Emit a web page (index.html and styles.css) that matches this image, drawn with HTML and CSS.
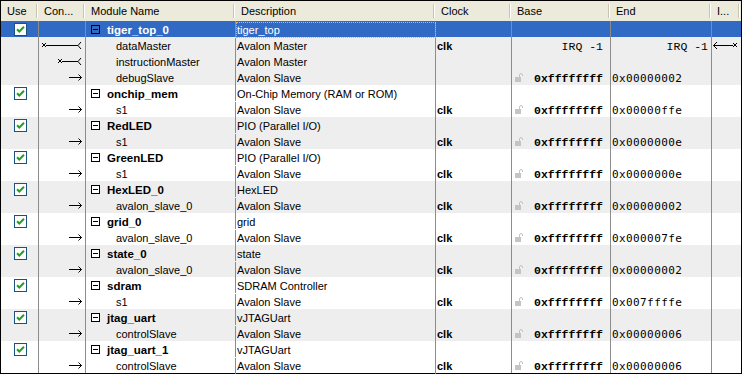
FILE: index.html
```html
<!DOCTYPE html>
<html>
<head>
<meta charset="utf-8">
<link rel="stylesheet" href="styles.css">
</head>
<body>
<div class="frame">
  <div class="header">
    <div class="hc">Use</div>
    <div class="hc">Con...</div>
    <div class="hc">Module Name</div>
    <div class="hc">Description</div>
    <div class="hc">Clock</div>
    <div class="hc">Base</div>
    <div class="hc">End</div>
    <div class="hc">I...</div>
  </div>

  <div class="row sel">
    <div class="c use"><span class="cb"><svg width="9" height="9" viewBox="0 0 9 9"><path d="M1 4.2 L3.3 6.5 L8 1.8" fill="none" stroke="#21a121" stroke-width="2"/></svg></span></div>
    <div class="c con"></div>
    <div class="c mod"><span class="tg"></span><b>tiger_top_0</b></div>
    <div class="c desc focus">tiger_top</div>
    <div class="c clk"></div>
    <div class="c base"></div>
    <div class="c end"></div>
    <div class="c irq"></div>
  </div>
  <div class="row gray">
    <div class="c use"></div>
    <div class="c con"><svg width="42" height="16" viewBox="0 0 42 16"><path d="M1 6 L5 10 M5 6 L1 10 M5 8.5 H37 M40 5 L37 8.5 L40 12" fill="none" stroke="#000" stroke-width="1"/></svg></div>
    <div class="c mod sub">dataMaster</div>
    <div class="c desc">Avalon Master</div>
    <div class="c clk"><b>clk</b></div>
    <div class="c base"><span class="irqv">IRQ -1</span></div>
    <div class="c end end-irq"><span class="irqv">IRQ -1</span></div>
    <div class="c irq"><svg width="28" height="16" viewBox="0 0 28 16"><path d="M5 5 L1.5 8.5 L5 12 M1.5 8.5 H21 M21 6 L25 10 M25 6 L21 10" fill="none" stroke="#000" stroke-width="1"/></svg></div>
  </div>
  <div class="row gray">
    <div class="c use"></div>
    <div class="c con"><svg width="26" height="16" viewBox="0 0 26 16"><path d="M1 6 L5 10 M5 6 L1 10 M5 8.5 H21 M24 5 L21 8.5 L24 12" fill="none" stroke="#000" stroke-width="1"/></svg></div>
    <div class="c mod sub">instructionMaster</div>
    <div class="c desc">Avalon Master</div>
    <div class="c clk"></div>
    <div class="c base"></div>
    <div class="c end"></div>
    <div class="c irq"></div>
  </div>
  <div class="row gray">
    <div class="c use"></div>
    <div class="c con"><svg class="arr" width="14" height="16" viewBox="0 0 14 16"><path d="M0 8.5 H12.5 M9.5 5.5 L12.5 8.5 L9.5 11.5" fill="none" stroke="#000" stroke-width="1"/></svg></div>
    <div class="c mod sub">debugSlave</div>
    <div class="c desc">Avalon Slave</div>
    <div class="c clk"></div>
    <div class="c base"><svg class="lock" width="8" height="9" viewBox="0 0 8 9"><path d="M0 4 H6 V9 H0 Z" fill="#c4c4c4"/><path d="M4.5 4 V2 Q4.5 0.5 6 0.5 Q7.5 0.5 7.5 2 V3" fill="none" stroke="#c4c4c4" stroke-width="1"/></svg><b class="hex">0xffffffff</b></div>
    <div class="c end"><span class="hv">0x00000002</span></div>
    <div class="c irq"></div>
  </div>

  <div class="row">
    <div class="c use"><span class="cb"><svg width="9" height="9" viewBox="0 0 9 9"><path d="M1 4.2 L3.3 6.5 L8 1.8" fill="none" stroke="#21a121" stroke-width="2"/></svg></span></div>
    <div class="c con"></div>
    <div class="c mod"><span class="tg"></span><b>onchip_mem</b></div>
    <div class="c desc">On-Chip Memory (RAM or ROM)</div>
    <div class="c clk"></div><div class="c base"></div><div class="c end"></div><div class="c irq"></div>
  </div>
  <div class="row">
    <div class="c use"></div>
    <div class="c con"><svg class="arr" width="14" height="16" viewBox="0 0 14 16"><path d="M0 8.5 H12.5 M9.5 5.5 L12.5 8.5 L9.5 11.5" fill="none" stroke="#000" stroke-width="1"/></svg></div>
    <div class="c mod sub">s1</div>
    <div class="c desc">Avalon Slave</div>
    <div class="c clk"><b>clk</b></div>
    <div class="c base"><svg class="lock" width="8" height="9" viewBox="0 0 8 9"><path d="M0 4 H6 V9 H0 Z" fill="#c4c4c4"/><path d="M4.5 4 V2 Q4.5 0.5 6 0.5 Q7.5 0.5 7.5 2 V3" fill="none" stroke="#c4c4c4" stroke-width="1"/></svg><b class="hex">0xffffffff</b></div>
    <div class="c end"><span class="hv">0x00000ffe</span></div>
    <div class="c irq"></div>
  </div>

  <div class="row gray">
    <div class="c use"><span class="cb"><svg width="9" height="9" viewBox="0 0 9 9"><path d="M1 4.2 L3.3 6.5 L8 1.8" fill="none" stroke="#21a121" stroke-width="2"/></svg></span></div>
    <div class="c con"></div>
    <div class="c mod"><span class="tg"></span><b>RedLED</b></div>
    <div class="c desc">PIO (Parallel I/O)</div>
    <div class="c clk"></div><div class="c base"></div><div class="c end"></div><div class="c irq"></div>
  </div>
  <div class="row gray">
    <div class="c use"></div>
    <div class="c con"><svg class="arr" width="14" height="16" viewBox="0 0 14 16"><path d="M0 8.5 H12.5 M9.5 5.5 L12.5 8.5 L9.5 11.5" fill="none" stroke="#000" stroke-width="1"/></svg></div>
    <div class="c mod sub">s1</div>
    <div class="c desc">Avalon Slave</div>
    <div class="c clk"><b>clk</b></div>
    <div class="c base"><svg class="lock" width="8" height="9" viewBox="0 0 8 9"><path d="M0 4 H6 V9 H0 Z" fill="#c4c4c4"/><path d="M4.5 4 V2 Q4.5 0.5 6 0.5 Q7.5 0.5 7.5 2 V3" fill="none" stroke="#c4c4c4" stroke-width="1"/></svg><b class="hex">0xffffffff</b></div>
    <div class="c end"><span class="hv">0x0000000e</span></div>
    <div class="c irq"></div>
  </div>

  <div class="row">
    <div class="c use"><span class="cb"><svg width="9" height="9" viewBox="0 0 9 9"><path d="M1 4.2 L3.3 6.5 L8 1.8" fill="none" stroke="#21a121" stroke-width="2"/></svg></span></div>
    <div class="c con"></div>
    <div class="c mod"><span class="tg"></span><b>GreenLED</b></div>
    <div class="c desc">PIO (Parallel I/O)</div>
    <div class="c clk"></div><div class="c base"></div><div class="c end"></div><div class="c irq"></div>
  </div>
  <div class="row">
    <div class="c use"></div>
    <div class="c con"><svg class="arr" width="14" height="16" viewBox="0 0 14 16"><path d="M0 8.5 H12.5 M9.5 5.5 L12.5 8.5 L9.5 11.5" fill="none" stroke="#000" stroke-width="1"/></svg></div>
    <div class="c mod sub">s1</div>
    <div class="c desc">Avalon Slave</div>
    <div class="c clk"><b>clk</b></div>
    <div class="c base"><svg class="lock" width="8" height="9" viewBox="0 0 8 9"><path d="M0 4 H6 V9 H0 Z" fill="#c4c4c4"/><path d="M4.5 4 V2 Q4.5 0.5 6 0.5 Q7.5 0.5 7.5 2 V3" fill="none" stroke="#c4c4c4" stroke-width="1"/></svg><b class="hex">0xffffffff</b></div>
    <div class="c end"><span class="hv">0x0000000e</span></div>
    <div class="c irq"></div>
  </div>

  <div class="row gray">
    <div class="c use"><span class="cb"><svg width="9" height="9" viewBox="0 0 9 9"><path d="M1 4.2 L3.3 6.5 L8 1.8" fill="none" stroke="#21a121" stroke-width="2"/></svg></span></div>
    <div class="c con"></div>
    <div class="c mod"><span class="tg"></span><b>HexLED_0</b></div>
    <div class="c desc">HexLED</div>
    <div class="c clk"></div><div class="c base"></div><div class="c end"></div><div class="c irq"></div>
  </div>
  <div class="row gray">
    <div class="c use"></div>
    <div class="c con"><svg class="arr" width="14" height="16" viewBox="0 0 14 16"><path d="M0 8.5 H12.5 M9.5 5.5 L12.5 8.5 L9.5 11.5" fill="none" stroke="#000" stroke-width="1"/></svg></div>
    <div class="c mod sub">avalon_slave_0</div>
    <div class="c desc">Avalon Slave</div>
    <div class="c clk"><b>clk</b></div>
    <div class="c base"><svg class="lock" width="8" height="9" viewBox="0 0 8 9"><path d="M0 4 H6 V9 H0 Z" fill="#c4c4c4"/><path d="M4.5 4 V2 Q4.5 0.5 6 0.5 Q7.5 0.5 7.5 2 V3" fill="none" stroke="#c4c4c4" stroke-width="1"/></svg><b class="hex">0xffffffff</b></div>
    <div class="c end"><span class="hv">0x00000002</span></div>
    <div class="c irq"></div>
  </div>

  <div class="row">
    <div class="c use"><span class="cb"><svg width="9" height="9" viewBox="0 0 9 9"><path d="M1 4.2 L3.3 6.5 L8 1.8" fill="none" stroke="#21a121" stroke-width="2"/></svg></span></div>
    <div class="c con"></div>
    <div class="c mod"><span class="tg"></span><b>grid_0</b></div>
    <div class="c desc">grid</div>
    <div class="c clk"></div><div class="c base"></div><div class="c end"></div><div class="c irq"></div>
  </div>
  <div class="row">
    <div class="c use"></div>
    <div class="c con"><svg class="arr" width="14" height="16" viewBox="0 0 14 16"><path d="M0 8.5 H12.5 M9.5 5.5 L12.5 8.5 L9.5 11.5" fill="none" stroke="#000" stroke-width="1"/></svg></div>
    <div class="c mod sub">avalon_slave_0</div>
    <div class="c desc">Avalon Slave</div>
    <div class="c clk"><b>clk</b></div>
    <div class="c base"><svg class="lock" width="8" height="9" viewBox="0 0 8 9"><path d="M0 4 H6 V9 H0 Z" fill="#c4c4c4"/><path d="M4.5 4 V2 Q4.5 0.5 6 0.5 Q7.5 0.5 7.5 2 V3" fill="none" stroke="#c4c4c4" stroke-width="1"/></svg><b class="hex">0xffffffff</b></div>
    <div class="c end"><span class="hv">0x000007fe</span></div>
    <div class="c irq"></div>
  </div>

  <div class="row gray">
    <div class="c use"><span class="cb"><svg width="9" height="9" viewBox="0 0 9 9"><path d="M1 4.2 L3.3 6.5 L8 1.8" fill="none" stroke="#21a121" stroke-width="2"/></svg></span></div>
    <div class="c con"></div>
    <div class="c mod"><span class="tg"></span><b>state_0</b></div>
    <div class="c desc">state</div>
    <div class="c clk"></div><div class="c base"></div><div class="c end"></div><div class="c irq"></div>
  </div>
  <div class="row gray">
    <div class="c use"></div>
    <div class="c con"><svg class="arr" width="14" height="16" viewBox="0 0 14 16"><path d="M0 8.5 H12.5 M9.5 5.5 L12.5 8.5 L9.5 11.5" fill="none" stroke="#000" stroke-width="1"/></svg></div>
    <div class="c mod sub">avalon_slave_0</div>
    <div class="c desc">Avalon Slave</div>
    <div class="c clk"><b>clk</b></div>
    <div class="c base"><svg class="lock" width="8" height="9" viewBox="0 0 8 9"><path d="M0 4 H6 V9 H0 Z" fill="#c4c4c4"/><path d="M4.5 4 V2 Q4.5 0.5 6 0.5 Q7.5 0.5 7.5 2 V3" fill="none" stroke="#c4c4c4" stroke-width="1"/></svg><b class="hex">0xffffffff</b></div>
    <div class="c end"><span class="hv">0x00000002</span></div>
    <div class="c irq"></div>
  </div>

  <div class="row">
    <div class="c use"><span class="cb"><svg width="9" height="9" viewBox="0 0 9 9"><path d="M1 4.2 L3.3 6.5 L8 1.8" fill="none" stroke="#21a121" stroke-width="2"/></svg></span></div>
    <div class="c con"></div>
    <div class="c mod"><span class="tg"></span><b>sdram</b></div>
    <div class="c desc">SDRAM Controller</div>
    <div class="c clk"></div><div class="c base"></div><div class="c end"></div><div class="c irq"></div>
  </div>
  <div class="row">
    <div class="c use"></div>
    <div class="c con"><svg class="arr" width="14" height="16" viewBox="0 0 14 16"><path d="M0 8.5 H12.5 M9.5 5.5 L12.5 8.5 L9.5 11.5" fill="none" stroke="#000" stroke-width="1"/></svg></div>
    <div class="c mod sub">s1</div>
    <div class="c desc">Avalon Slave</div>
    <div class="c clk"><b>clk</b></div>
    <div class="c base"><svg class="lock" width="8" height="9" viewBox="0 0 8 9"><path d="M0 4 H6 V9 H0 Z" fill="#c4c4c4"/><path d="M4.5 4 V2 Q4.5 0.5 6 0.5 Q7.5 0.5 7.5 2 V3" fill="none" stroke="#c4c4c4" stroke-width="1"/></svg><b class="hex">0xffffffff</b></div>
    <div class="c end"><span class="hv">0x007ffffe</span></div>
    <div class="c irq"></div>
  </div>

  <div class="row gray">
    <div class="c use"><span class="cb"><svg width="9" height="9" viewBox="0 0 9 9"><path d="M1 4.2 L3.3 6.5 L8 1.8" fill="none" stroke="#21a121" stroke-width="2"/></svg></span></div>
    <div class="c con"></div>
    <div class="c mod"><span class="tg"></span><b>jtag_uart</b></div>
    <div class="c desc">vJTAGUart</div>
    <div class="c clk"></div><div class="c base"></div><div class="c end"></div><div class="c irq"></div>
  </div>
  <div class="row gray">
    <div class="c use"></div>
    <div class="c con"><svg class="arr" width="14" height="16" viewBox="0 0 14 16"><path d="M0 8.5 H12.5 M9.5 5.5 L12.5 8.5 L9.5 11.5" fill="none" stroke="#000" stroke-width="1"/></svg></div>
    <div class="c mod sub">controlSlave</div>
    <div class="c desc">Avalon Slave</div>
    <div class="c clk"><b>clk</b></div>
    <div class="c base"><svg class="lock" width="8" height="9" viewBox="0 0 8 9"><path d="M0 4 H6 V9 H0 Z" fill="#c4c4c4"/><path d="M4.5 4 V2 Q4.5 0.5 6 0.5 Q7.5 0.5 7.5 2 V3" fill="none" stroke="#c4c4c4" stroke-width="1"/></svg><b class="hex">0xffffffff</b></div>
    <div class="c end"><span class="hv">0x00000006</span></div>
    <div class="c irq"></div>
  </div>

  <div class="row">
    <div class="c use"><span class="cb"><svg width="9" height="9" viewBox="0 0 9 9"><path d="M1 4.2 L3.3 6.5 L8 1.8" fill="none" stroke="#21a121" stroke-width="2"/></svg></span></div>
    <div class="c con"></div>
    <div class="c mod"><span class="tg"></span><b>jtag_uart_1</b></div>
    <div class="c desc">vJTAGUart</div>
    <div class="c clk"></div><div class="c base"></div><div class="c end"></div><div class="c irq"></div>
  </div>
  <div class="row">
    <div class="c use"></div>
    <div class="c con"><svg class="arr" width="14" height="16" viewBox="0 0 14 16"><path d="M0 8.5 H12.5 M9.5 5.5 L12.5 8.5 L9.5 11.5" fill="none" stroke="#000" stroke-width="1"/></svg></div>
    <div class="c mod sub">controlSlave</div>
    <div class="c desc">Avalon Slave</div>
    <div class="c clk"><b>clk</b></div>
    <div class="c base"><svg class="lock" width="8" height="9" viewBox="0 0 8 9"><path d="M0 4 H6 V9 H0 Z" fill="#c4c4c4"/><path d="M4.5 4 V2 Q4.5 0.5 6 0.5 Q7.5 0.5 7.5 2 V3" fill="none" stroke="#c4c4c4" stroke-width="1"/></svg><b class="hex">0xffffffff</b></div>
    <div class="c end"><span class="hv">0x00000006</span></div>
    <div class="c irq"></div>
  </div>
</div>
</body>
</html>
```

FILE: styles.css
```css
html, body {
  margin: 0;
  padding: 0;
  background: #fff;
}
.frame {
  width: 740px;
  border: 1px solid #000;
  font-family: "Liberation Sans", Arial, sans-serif;
  font-size: 11px;
  color: #000;
}
.header,
.row {
  display: grid;
  grid-template-columns: 38px 47px 150px 200px 76px 99px 101px 29px;
}
.header {
  height: 20px;
  background: #ebeadb;
}
.hc {
  line-height: 20px;
  padding-left: 6px;
  white-space: nowrap;
  overflow: hidden;
  background:
    linear-gradient(#c7c5b2, #c7c5b2) no-repeat right 2px top 3px / 1px 14px,
    linear-gradient(#ffffff, #ffffff) no-repeat right 1px top 3px / 1px 14px,
    #ebeadb;
}
.hc:nth-child(n+2) {
  padding-left: 5px;
}
.row {
  height: 16px;
  background: #fff;
}
.row.gray {
  background: #eeeeee;
}
.row.sel {
  background: #316ac5;
  color: #fff;
}
.c {
  border-right: 1px solid #8c8c8c;
  height: 16px;
  line-height: 15px;
  white-space: nowrap;
  overflow: hidden;
  display: flex;
  align-items: center;
  box-sizing: border-box;
}
.c.irq {
  border-right: none;
}
.mod b,
.mod.sub,
.desc,
.clk b,
.hex,
.irqv,
.hv {
  position: relative;
  top: 1px;
}
.use {
  justify-content: center;
  padding-left: 1px;
}
.cb {
  width: 11px;
  height: 11px;
  border: 1px solid #1c5180;
  background: #fff;
  display: flex;
  align-items: center;
  justify-content: center;
  margin-top: 1px;
}
.con {
  justify-content: flex-end;
  padding-right: 2px;
}
.mod {
  padding-left: 5px;
}
.mod b {
  font-weight: bold;
  font-size: 11.5px;
}
.mod.sub {
  padding-left: 30px;
}
.tg {
  width: 7px;
  height: 7px;
  border: 1px solid #000;
  margin-right: 7px;
  background: #fff;
  display: flex;
  align-items: center;
  justify-content: center;
  flex: none;
}
.sel .tg {
  background: #316ac5;
}
.tg::before {
  content: "";
  width: 5px;
  height: 1px;
  background: #000;
}
.desc {
  padding-left: 1px;
}
.desc.focus {
  outline: 1px dotted #f0b040;
  outline-offset: -1px;
}
.clk {
  padding-left: 1px;
}
.base {
  padding-left: 3px;
  padding-right: 7px;
}
.base .irqv {
  margin-left: auto;
}
.lock {
  flex: none;
  margin-top: 1px;
}
.hex {
  margin-left: auto;
  font-family: "Liberation Mono", "Courier New", monospace;
  font-weight: bold;
  font-size: 11.5px;
}
.irqv {
  font-family: "Liberation Mono", "Courier New", monospace;
  font-size: 11.5px;
}
.end {
  padding-left: 1px;
}
.end.end-irq {
  justify-content: flex-end;
  padding-right: 3px;
}
.hv {
  font-family: "DejaVu Sans Mono", monospace;
  font-size: 11px;
  letter-spacing: 0.4px;
}
```
